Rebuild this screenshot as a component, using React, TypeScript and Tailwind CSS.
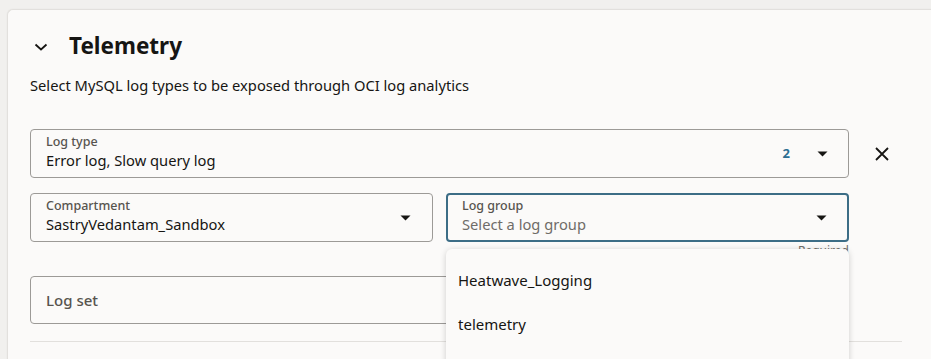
import React from "react";

const Caret = () => (
  <svg width="11" height="6" viewBox="0 0 11 6" className="shrink-0">
    <path d="M0.5 0.5 L10.5 0.5 L5.5 5.5 Z" fill="#161513" />
  </svg>
);

export default function App() {
  return (
    <div
      className="h-[359px] w-[931px] overflow-hidden bg-[#f1f0ee] pl-[7px] pt-[9px]"
      style={{ fontFamily: '"Noto Sans", "Open Sans", sans-serif' }}
    >
      <div className="relative h-[400px] rounded-tl-[6px] border-l border-t border-[#e2e0dd] bg-[#fbfaf9] pl-[22px] pt-[20px] shadow-[0_0_2px_rgba(0,0,0,0.06)]">
        {/* Header */}
        <div className="flex h-[32px] items-center">
          <svg width="14" height="8" viewBox="0 0 14 8" className="ml-[4px] mt-[2px]">
            <path d="M1.5 1.5 L7 6.5 L12.5 1.5" fill="none" stroke="#161513" strokeWidth="1.8" />
          </svg>
          <h2 className="ml-[21px] text-[22.5px] font-bold leading-[32px] text-[#161513]">Telemetry</h2>
        </div>
        <p className="mt-[12px] text-[14.7px] leading-[22px] text-[#161513]">
          Select MySQL log types to be exposed through OCI log analytics
        </p>

        {/* Log type row */}
        <div className="mt-[33px] flex items-center">
          <div className="flex h-[49px] w-[819px] items-center rounded-[4px] border border-[#9c9a97] bg-[#fbfaf9] pl-[15px] pr-[20px]">
            <div className="flex flex-1 flex-col pb-[3px]">
              <span className="text-[12.5px] font-medium leading-[16px] text-[#57544f]">Log type</span>
              <span className="text-[14.7px] leading-[20px] text-[#161513]">Error log, Slow query log</span>
            </div>
            <span className="mr-[27px] text-[13px] font-bold text-[#2c6e92]">2</span>
            <Caret />
          </div>
          <svg width="14" height="14" viewBox="0 0 14 14" className="ml-[26px]">
            <path d="M1 1 L13 13 M13 1 L1 13" stroke="#161513" strokeWidth="1.8" />
          </svg>
        </div>

        {/* Compartment / Log group row */}
        <div className="mt-[15px] flex w-[819px] gap-[13px]">
          <div className="flex h-[49px] w-[403px] items-center rounded-[4px] border border-[#9c9a97] pl-[15px] pr-[21px]">
            <div className="flex flex-1 flex-col pb-[3px]">
              <span className="text-[12.5px] font-medium leading-[16px] text-[#57544f]">Compartment</span>
              <span className="text-[14.7px] leading-[20px] text-[#161513]">SastryVedantam_Sandbox</span>
            </div>
            <Caret />
          </div>
          <div className="relative flex h-[49px] w-[403px] flex-col">
            <div className="flex h-[49px] items-center rounded-[4px] border-2 border-[#3c6d86] pl-[14px] pr-[20px]">
              <div className="flex flex-1 flex-col pb-[3px]">
                <span className="text-[12.5px] font-medium leading-[16px] text-[#57544f]">Log group</span>
                <span className="text-[14.7px] leading-[20px] text-[#6f6c68]">Select a log group</span>
              </div>
              <Caret />
            </div>
            <span className="absolute right-0 top-[50px] text-[12px] leading-[16px] text-[#6f6c68]">Required</span>
          </div>
        </div>

        {/* Log set */}
        <div className="mt-[34px] flex h-[48px] w-[819px] items-center rounded-[4px] border border-[#9c9a97] pl-[15px]">
          <span className="text-[15px] font-medium text-[#57544f]">Log set</span>
        </div>

        <div className="mt-[17px] h-px w-[872px] bg-[#e2e0dd]" />

        {/* Dropdown menu overlay */}
        <div className="absolute left-[438px] top-[239px] w-[403px] rounded-[6px] bg-[#fbfaf9] pt-[9px] shadow-[0_1px_6px_rgba(0,0,0,0.18)]">
          <div className="flex h-[44px] items-center pl-[12px] text-[15px] text-[#161513]">Heatwave_Logging</div>
          <div className="flex h-[44px] items-center pl-[12px] text-[15px] text-[#161513]">telemetry</div>
          <div className="h-[40px]" />
        </div>
      </div>
    </div>
  );
}
